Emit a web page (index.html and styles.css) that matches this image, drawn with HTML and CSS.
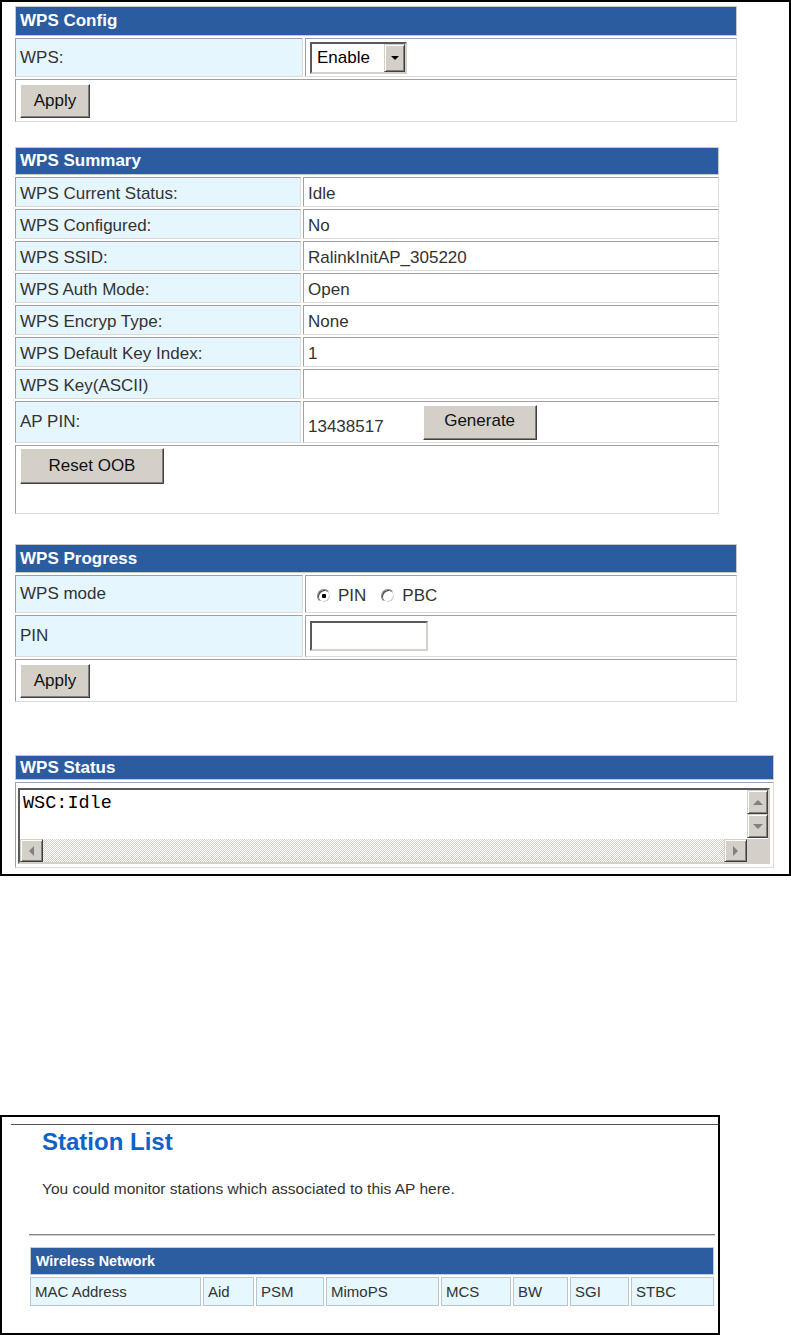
FILE: index.html
```html
<!DOCTYPE html>
<html lang="en">
<head>
  <meta charset="UTF-8" />
  <meta name="viewport" content="width=device-width, initial-scale=1.0"/>
  <title>WPS / Station List</title>
  <link rel="stylesheet" href="styles.css">
</head>
<body>
  <div class="shot wps-shot">

    <div class="panel config-panel">
      <div class="panel-title">WPS Config</div>
      <div class="cell label">WPS:</div>
      <div class="cell value">
        <span class="select">
          <span class="select-text">Enable</span>
          <span class="select-arrow"></span>
        </span>
      </div>
      <div class="cell wide"><button class="btn btn-apply">Apply</button></div>
    </div>

    <div class="panel summary-panel">
      <div class="panel-title">WPS Summary</div>
      <div class="cell label low">WPS Current Status:</div>
      <div class="cell value low">Idle</div>
      <div class="cell label low">WPS Configured:</div>
      <div class="cell value low">No</div>
      <div class="cell label low">WPS SSID:</div>
      <div class="cell value low">RalinkInitAP_305220</div>
      <div class="cell label low">WPS Auth Mode:</div>
      <div class="cell value low">Open</div>
      <div class="cell label low">WPS Encryp Type:</div>
      <div class="cell value low">None</div>
      <div class="cell label low">WPS Default Key Index:</div>
      <div class="cell value low">1</div>
      <div class="cell label low">WPS Key(ASCII)</div>
      <div class="cell value low"></div>
      <div class="cell label">AP PIN:</div>
      <div class="cell value">
        <span class="pin-code">13438517</span>
        <button class="btn btn-generate">Generate</button>
      </div>
      <div class="cell wide top"><button class="btn btn-reset">Reset OOB</button></div>
    </div>

    <div class="panel progress-panel">
      <div class="panel-title">WPS Progress</div>
      <div class="cell label">WPS mode</div>
      <div class="cell value">
        <label class="radio-item"><input type="radio" name="mode" class="radio" checked> PIN</label>
        <label class="radio-item"><input type="radio" name="mode" class="radio"> PBC</label>
      </div>
      <div class="cell label">PIN</div>
      <div class="cell value"><input type="text" class="pin-input"></div>
      <div class="cell wide"><button class="btn btn-apply">Apply</button></div>
    </div>

    <div class="panel status-panel">
      <div class="panel-title">WPS Status</div>
      <div class="cell wide status-cell">
        <div class="textbox">
          <div class="textbox-text">WSC:Idle</div>
          <div class="vscroll">
            <span class="sb-btn sb-up"></span>
            <span class="sb-btn sb-down"></span>
          </div>
          <div class="hscroll">
            <span class="sb-btn sb-left"></span>
            <span class="sb-track"></span>
            <span class="sb-btn sb-right"></span>
          </div>
          <div class="sb-corner"></div>
        </div>
      </div>
    </div>

  </div>

  <div class="shot station-shot">
    <div class="station-rule"></div>
    <h1 class="station-title">Station List</h1>
    <p class="station-desc">You could monitor stations which associated to this AP here.</p>
    <div class="station-hr"></div>
    <div class="station-table">
      <div class="station-head">Wireless Network</div>
      <div class="station-cell">MAC Address</div>
      <div class="station-cell">Aid</div>
      <div class="station-cell">PSM</div>
      <div class="station-cell">MimoPS</div>
      <div class="station-cell">MCS</div>
      <div class="station-cell">BW</div>
      <div class="station-cell">SGI</div>
      <div class="station-cell">STBC</div>
    </div>
  </div>
</body>
</html>
```

FILE: styles.css
```css
*, *::before, *::after {
  box-sizing: border-box;
}

body {
  margin: 0;
  background-color: #ffffff;
  font-family: 'Liberation Sans', Arial, sans-serif;
  color: #333333;
}

.shot {
  border: 2px solid #000000;
}

/* ---- WPS screenshot ---- */

.wps-shot {
  width: 791px;
  height: 876px;
  padding: 4px 0 0 13px;
  font-size: 17px;
}

.panel {
  display: grid;
  grid-template-columns: 288px 1fr;
  gap: 2px;
}

.config-panel {
  width: 722px;
  grid-template-rows: 30px 39px 43px;
}

.summary-panel {
  width: 704px;
  margin-top: 25px;
  grid-template-columns: 286px 1fr;
  grid-template-rows: 28px repeat(7, 30px) 42px 69px;
}

.progress-panel {
  width: 722px;
  margin-top: 30px;
  grid-template-rows: 29px 38px 42px 43px;
}

.status-panel {
  width: 759px;
  margin-top: 53px;
  grid-template-rows: 25px 86px;
}

.panel-title {
  grid-column: 1 / -1;
  display: flex;
  align-items: center;
  padding-left: 4px;
  background-color: #2b5c9f;
  border: 1px solid #c9c9c9;
  color: #ffffff;
  font-weight: bold;
}

.cell {
  display: flex;
  align-items: center;
  padding: 0 4px;
  border: 1px solid;
  border-color: #a0a0a0 #dedbd6 #dedbd6 #a0a0a0;
  background-color: #ffffff;
  white-space: nowrap;
}

.cell.label {
  background-color: #e6f6fe;
}

.cell.wide {
  grid-column: 1 / -1;
}

.cell.low {
  padding-top: 3px;
}

.cell.top {
  align-items: flex-start;
  padding-top: 2px;
}

.btn {
  font-family: inherit;
  font-size: 17px;
  color: #111111;
  background-color: #d4d0c8;
  border: 1px solid;
  border-color: #ffffff #404040 #404040 #ffffff;
  box-shadow: inset -1px -1px 0 #808080;
  padding: 0;
  height: 34px;
}

.btn-apply {
  width: 70px;
}

.btn-generate {
  width: 114px;
  height: 35px;
  margin-left: 39px;
  padding-bottom: 3px;
}

.btn-reset {
  width: 144px;
  height: 36px;
}

.pin-code {
  margin-top: 10px;
}

.select {
  display: inline-flex;
  align-items: stretch;
  width: 97px;
  height: 32px;
  border: 2px solid;
  border-color: #5a5a5a #d4d0c8 #d4d0c8 #5a5a5a;
  background-color: #ffffff;
  color: #000000;
}

.select-text {
  flex: 1;
  display: flex;
  align-items: center;
  padding-left: 5px;
}

.select-arrow {
  width: 21px;
  display: flex;
  align-items: center;
  justify-content: center;
  background-color: #d4d0c8;
  border: 1px solid;
  border-color: #d4d0c8 #404040 #404040 #d4d0c8;
  box-shadow: inset 1px 1px 0 #ffffff, inset -1px -1px 0 #808080;
}

.select-arrow::after {
  content: "";
  border-left: 4px solid transparent;
  border-right: 4px solid transparent;
  border-top: 4px solid #000000;
}

.radio-item {
  display: inline-flex;
  align-items: center;
  gap: 7px;
  margin-left: 7px;
  margin-right: 8px;
  padding-top: 3px;
}

.radio {
  appearance: none;
  flex: none;
  margin: 0;
  width: 14px;
  height: 14px;
  border-radius: 50%;
  border: 1px solid;
  border-color: #808080 #ffffff #ffffff #808080;
  box-shadow: inset 1px 1px 0 #404040, inset -1px -1px 0 #d4d0c8;
  background-color: #ffffff;
}

.radio:checked {
  background: radial-gradient(circle, #000000 0 2px, #ffffff 2.5px);
}

.pin-input {
  width: 118px;
  height: 30px;
  margin: 0;
  border: 2px solid;
  border-color: #5a5a5a #d4d0c8 #d4d0c8 #5a5a5a;
  background-color: #ffffff;
}

.status-cell {
  align-items: stretch;
  padding: 5px 3px 3px 2px;
}

.textbox {
  flex: 1;
  display: grid;
  grid-template-columns: 1fr 21px;
  grid-template-rows: 1fr 23px;
  border: 2px solid;
  border-color: #5a5a5a #d4d0c8 #d4d0c8 #5a5a5a;
  background-color: #ffffff;
}

.textbox-text {
  padding: 3px 0 0 3px;
  font-family: 'Liberation Mono', 'Courier New', monospace;
  font-size: 18.5px;
  color: #000000;
}

.vscroll {
  display: flex;
  flex-direction: column;
}

.vscroll .sb-btn {
  height: 24px;
}

.hscroll {
  display: flex;
}

.hscroll .sb-btn {
  width: 23px;
}

.sb-track {
  flex: 1;
  background: repeating-conic-gradient(#d4d0c8 0 25%, #ffffff 0 50%) 0 0 / 2px 2px;
}

.sb-corner {
  background-color: #d4d0c8;
}

.sb-btn {
  display: flex;
  align-items: center;
  justify-content: center;
  background-color: #d4d0c8;
  border: 1px solid;
  border-color: #d4d0c8 #404040 #404040 #d4d0c8;
  box-shadow: inset 1px 1px 0 #ffffff, inset -1px -1px 0 #808080;
}

.sb-btn::after {
  content: "";
}

.sb-up::after {
  border-left: 5px solid transparent;
  border-right: 5px solid transparent;
  border-bottom: 5px solid #808080;
}

.sb-down::after {
  border-left: 5px solid transparent;
  border-right: 5px solid transparent;
  border-top: 5px solid #808080;
}

.sb-left::after {
  border-top: 5px solid transparent;
  border-bottom: 5px solid transparent;
  border-right: 5px solid #808080;
}

.sb-right::after {
  border-top: 5px solid transparent;
  border-bottom: 5px solid transparent;
  border-left: 5px solid #808080;
}

/* ---- Station list screenshot ---- */

.station-shot {
  width: 720px;
  height: 220px;
  margin-top: 239px;
}

.station-rule {
  margin: 7px 0 0 9px;
  border-top: 1px solid #555555;
}

.station-title {
  margin: 3px 0 0 40px;
  font-size: 24px;
  font-weight: bold;
  color: #0d63c9;
}

.station-desc {
  margin: 24px 0 0 40px;
  font-size: 15.5px;
  color: #333333;
}

.station-hr {
  width: 686px;
  margin: 36px 0 0 27px;
  border-top: 1px solid #8a8a8a;
  border-bottom: 1px solid #cfcfcf;
}

.station-table {
  display: grid;
  grid-template-columns: 171px 51px 68px 113px 70px 55px 59px 83px;
  grid-template-rows: 28px 29px;
  gap: 2px;
  width: 684px;
  margin: 11px 0 0 28px;
}

.station-head {
  grid-column: 1 / -1;
  display: flex;
  align-items: center;
  padding-left: 5px;
  background-color: #2c5da0;
  border: 1px solid #c5ccd4;
  color: #ffffff;
  font-size: 14.3px;
  font-weight: bold;
}

.station-cell {
  display: flex;
  align-items: center;
  padding-left: 4px;
  background-color: #e6f7fe;
  border: 1px solid #b9c6d2;
  font-size: 15px;
  color: #333333;
}
```
